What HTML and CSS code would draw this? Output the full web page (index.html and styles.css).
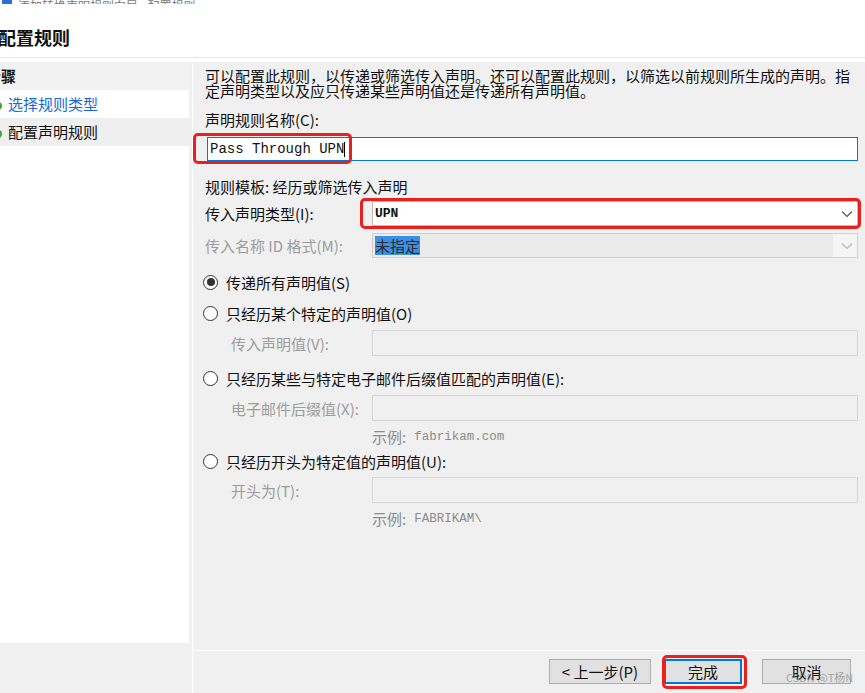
FILE: index.html
```html
<!DOCTYPE html>
<html lang="zh-CN">
<head>
    <meta charset="UTF-8" />
    <title>配置规则</title>
    <meta name="viewport" content="width=device-width, initial-scale=1.0" />
    <link rel="stylesheet" href="styles.css">
</head>
<body>
    <div class="titlebar">
        <span class="app-icon"></span>
        <span class="titlebar-text">添加转换声明规则向导 - 配置规则</span>
    </div>

    <header class="page-head">
        <h1>配置规则</h1>
    </header>

    <div class="main">
        <aside class="steps">
            <div class="steps-head">步骤</div>
            <div class="step done"><span class="dot"></span>选择规则类型</div>
            <div class="step current"><span class="dot"></span>配置声明规则</div>
        </aside>

        <section class="content">
            <div class="form">
                <p class="intro">可以配置此规则，以传递或筛选传入声明。还可以配置此规则，以筛选以前规则所生成的声明。指定声明类型以及应只传递某些声明值还是传递所有声明值。</p>

                <div class="label">声明规则名称(C):</div>
                <div class="textbox focused">Pass Through UPN<span class="caret"></span></div>

                <div class="template">规则模板: 经历或筛选传入声明</div>

                <div class="field-row first">
                    <span class="field-label">传入声明类型(I):</span>
                    <div class="combo">
                        <span class="combo-field"><span class="combo-value">UPN</span></span>
                        <svg class="chevron" width="12" height="8" viewBox="0 0 12 8"><polyline points="1,1.5 6,6.5 11,1.5" fill="none" stroke="#555" stroke-width="1.2"/></svg>
                    </div>
                </div>

                <div class="field-row second">
                    <span class="field-label disabled">传入名称 ID 格式(M):</span>
                    <div class="combo disabled">
                        <span class="combo-field"><span class="selected-text">未指定</span></span>
                        <svg class="chevron" width="12" height="8" viewBox="0 0 12 8"><polyline points="1,1.5 6,6.5 11,1.5" fill="none" stroke="#b5b5b5" stroke-width="1.2"/></svg>
                    </div>
                </div>

                <div class="radio-row r1">
                    <span class="radio checked"></span>
                    <span>传递所有声明值(S)</span>
                </div>

                <div class="radio-row r2">
                    <span class="radio"></span>
                    <span>只经历某个特定的声明值(O)</span>
                </div>
                <div class="sub-row">
                    <span class="sub-label">传入声明值(V):</span>
                    <div class="input-disabled"></div>
                </div>

                <div class="radio-row r3">
                    <span class="radio"></span>
                    <span>只经历某些与特定电子邮件后缀值匹配的声明值(E):</span>
                </div>
                <div class="sub-row">
                    <span class="sub-label">电子邮件后缀值(X):</span>
                    <div class="input-disabled"></div>
                </div>
                <div class="example">示例:<span class="mono">fabrikam.com</span></div>

                <div class="radio-row r4">
                    <span class="radio"></span>
                    <span>只经历开头为特定值的声明值(U):</span>
                </div>
                <div class="sub-row tight">
                    <span class="sub-label">开头为(T):</span>
                    <div class="input-disabled"></div>
                </div>
                <div class="example">示例:<span class="mono">FABRIKAM\</span></div>
            </div>

            <div class="footer">
                <button class="btn btn-back">&lt; 上一步(P)</button>
                <button class="btn btn-finish">完成</button>
                <button class="btn btn-cancel">取消</button>
            </div>
        </section>
    </div>

    <!-- annotation marks drawn over the dialog -->
    <div class="mark mark-name"></div>
    <div class="mark mark-type"></div>
    <div class="mark mark-finish"></div>
    <div class="watermark">CSDN @T杨N</div>
</body>
</html>
```

FILE: styles.css
```css
body {
    margin: 0;
    width: 865px;
    height: 693px;
    overflow: hidden;
    position: relative;
    background: #ffffff;
    font-family: "Noto Sans CJK SC", "Noto Sans", sans-serif;
    font-size: 15px;
    color: #111;
}

/* window title, mostly cut off at the top */
.titlebar {
    height: 4px;
    overflow: hidden;
    display: flex;
    align-items: flex-end;
    gap: 6px;
    padding-left: 2px;
}

.app-icon {
    width: 10px;
    height: 10px;
    background: #2b6fd0;
    flex: none;
}

.titlebar-text {
    font-size: 12px;
    line-height: 12px;
    color: #777;
    margin-bottom: -8px;
}

.page-head {
    height: 54px;
    border-bottom: 1px solid #e6e6e6;
    box-sizing: border-box;
    padding-top: 21px;
    overflow: hidden;
}

.page-head h1 {
    margin: 0 0 0 -2px;
    font-size: 18px;
    font-weight: 700;
    line-height: 24px;
}

.main {
    margin-top: 4px;
    height: 631px;
    display: flex;
    background: #f0f0f0;
}

/* left step list */
.steps {
    width: 189px;
    height: 581px;
    background: #ffffff;
    flex: none;
    overflow: hidden;
}

.steps-head {
    height: 28px;
    line-height: 28px;
    background: #f2f2f2;
    font-weight: 700;
    text-indent: -14px;
    white-space: nowrap;
}

.step {
    height: 28px;
    line-height: 28px;
    padding-left: 8px;
    white-space: nowrap;
}

.step.done {
    color: #1668d8;
}

.step.current {
    background: #efefef;
    color: #111;
}

.dot {
    display: inline-block;
    width: 8px;
    height: 8px;
    border-radius: 50%;
    background: #3aa33a;
    margin-left: -14px;
    margin-right: 6px;
    vertical-align: middle;
}

/* right content */
.content {
    flex: 1;
    margin-left: 3px;
    border-left: 1px solid #ffffff;
    display: flex;
    flex-direction: column;
}

.form {
    height: 589px;
    box-sizing: border-box;
    padding: 6px 7px 0 12px;
    border-bottom: 1px solid #ffffff;
    flex: none;
}

.intro {
    margin: 0;
    line-height: 15px;
}

.label {
    margin-top: 13px;
    line-height: 18px;
}

.textbox {
    margin: 8px 0 0 2px;
    height: 24px;
    box-sizing: border-box;
    border: 1px solid #0078d7;
    background: #ffffff;
    padding-left: 2px;
    font-family: "Liberation Mono", monospace;
    font-size: 14px;
    line-height: 22px;
    display: flex;
    align-items: center;
}

.caret {
    display: inline-block;
    width: 1px;
    height: 15px;
    background: #000;
}

.template {
    margin-top: 17px;
    line-height: 18px;
}

.field-row {
    display: flex;
    align-items: center;
    height: 25px;
}

.field-row.first { margin-top: 5px; }
.field-row.second { margin-top: 7px; }

.field-label {
    width: 167px;
    flex: none;
    white-space: nowrap;
}

.disabled {
    color: #9c9c9c;
}

.combo {
    flex: 1;
    height: 25px;
    box-sizing: border-box;
    border: 1px solid #b9b9b9;
    background: #ffffff;
    display: flex;
    align-items: center;
    padding-right: 4px;
}

.combo.disabled {
    background: #f5f5f5;
    border-color: #d0d0d0;
}

.combo-field {
    flex: 1;
    height: 100%;
    display: flex;
    align-items: center;
    padding-left: 2px;
}

.combo.disabled .combo-field {
    background: #ebebeb;
    margin-right: 8px;
}

.combo-value {
    font-family: "Liberation Mono", monospace;
    font-size: 13px;
    font-weight: 700;
}

.selected-text {
    background: #3c8fe6;
    color: #2b2b2b;
    line-height: 19px;
}

.chevron {
    flex: none;
}

.radio-row {
    display: flex;
    align-items: center;
    gap: 8px;
    height: 18px;
    margin-left: -2px;
    white-space: nowrap;
}

.radio-row.r1 { margin-top: 15px; }
.radio-row.r2 { margin-top: 13px; }
.radio-row.r3 { margin-top: 13px; }
.radio-row.r4 { margin-top: 6px; }

.radio {
    width: 15px;
    height: 15px;
    box-sizing: border-box;
    border: 1px solid #333;
    border-radius: 50%;
    background: #fff;
    display: flex;
    align-items: center;
    justify-content: center;
    flex: none;
}

.radio.checked::after {
    content: "";
    width: 8px;
    height: 8px;
    border-radius: 50%;
    background: #333;
}

.sub-row {
    display: flex;
    align-items: center;
    height: 26px;
    margin-top: 8px;
    padding-left: 26px;
}

.sub-row.tight { margin-top: 7px; }

.sub-label {
    width: 141px;
    flex: none;
    color: #9c9c9c;
    white-space: nowrap;
}

.input-disabled {
    flex: 1;
    height: 26px;
    box-sizing: border-box;
    border: 1px solid #d6d6d6;
    background: #f0f0f0;
}

.example {
    margin: 7px 0 0 167px;
    height: 18px;
    line-height: 18px;
    color: #8c8c8c;
    display: flex;
    align-items: center;
}

.mono {
    font-family: "Liberation Mono", monospace;
    font-size: 12.5px;
    line-height: 18px;
    margin-left: 8px;
}

.footer {
    flex: 1;
    display: flex;
    justify-content: flex-end;
    align-items: flex-start;
    padding: 8px 14px 0 0;
}

.btn {
    height: 25px;
    box-sizing: border-box;
    background: #e1e1e1;
    border: 1px solid #adadad;
    font-family: "Noto Sans CJK SC", sans-serif;
    font-size: 15px;
    line-height: 21px;
    padding: 0;
    color: #111;
}

.btn-back { width: 102px; margin-right: 13px; }
.btn-finish {
    width: 78px;
    margin-right: 20px;
    border-color: #0078d7;
    box-shadow: inset 0 0 0 1px #0078d7;
}
.btn-cancel { width: 89px; }

/* red annotation boxes */
.mark {
    position: absolute;
    border: 3px solid #e8201e;
    border-radius: 5px;
    box-sizing: border-box;
}

.mark-name { left: 193px; top: 133px; width: 159px; height: 31px; }
.mark-type { left: 360px; top: 198px; width: 501px; height: 31px; }
.mark-finish { left: 662px; top: 655px; width: 85px; height: 34px; }

.watermark {
    position: absolute;
    left: 786px;
    top: 669px;
    font-size: 11px;
    color: rgba(110, 110, 110, 0.55);
}
```
